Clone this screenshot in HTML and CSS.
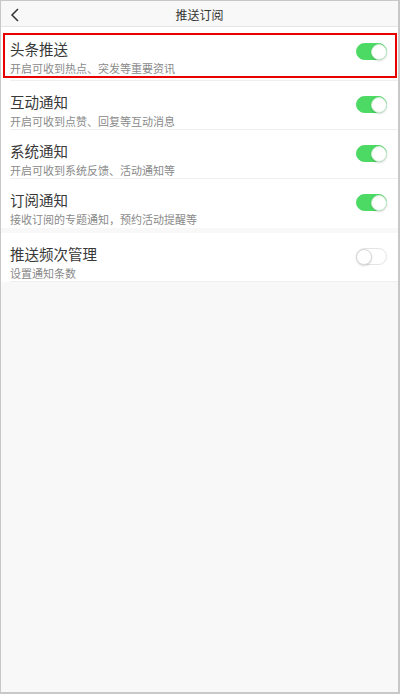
FILE: index.html
```html
<!DOCTYPE html>
<html lang="zh">
<head>
<meta charset="utf-8">
<title>推送订阅</title>
<link rel="stylesheet" href="styles.css">
</head>
<body>
<div class="screen">
  <header class="topbar">
    <svg class="back" width="10" height="14" viewBox="0 0 10 14"><polyline points="8,1 2,7 8,13" fill="none" stroke="#333" stroke-width="1.5"/></svg>
    <div class="topbar-title">推送订阅</div>
  </header>

  <section class="group">
    <div class="row row-first">
      <div class="row-inner">
        <div class="texts">
          <div class="title">头条推送</div>
          <div class="sub">开启可收到热点、突发等重要资讯</div>
        </div>
        <span class="switch on"><span class="knob"></span></span>
      </div>
    </div>
    <div class="row">
      <div class="row-inner">
        <div class="texts">
          <div class="title">互动通知</div>
          <div class="sub">开启可收到点赞、回复等互动消息</div>
        </div>
        <span class="switch on"><span class="knob"></span></span>
      </div>
    </div>
    <div class="row">
      <div class="row-inner">
        <div class="texts">
          <div class="title">系统通知</div>
          <div class="sub">开启可收到系统反馈、活动通知等</div>
        </div>
        <span class="switch on"><span class="knob"></span></span>
      </div>
    </div>
    <div class="row">
      <div class="row-inner last">
        <div class="texts">
          <div class="title">订阅通知</div>
          <div class="sub">接收订阅的专题通知，预约活动提醒等</div>
        </div>
        <span class="switch on"><span class="knob"></span></span>
      </div>
    </div>
  </section>

  <section class="group">
    <div class="row">
      <div class="row-inner">
        <div class="texts">
          <div class="title">推送频次管理</div>
          <div class="sub">设置通知条数</div>
        </div>
        <span class="switch"><span class="knob"></span></span>
      </div>
    </div>
  </section>

  <div class="highlight"></div>
</div>
</body>
</html>
```

FILE: styles.css
```css
html, body {
  margin: 0;
  padding: 0;
}
body {
  font-family: "Noto Sans CJK SC", "Noto Sans", sans-serif;
  background: #f8f8f8;
}
.screen {
  position: relative;
  width: 400px;
  height: 694px;
  box-sizing: border-box;
  border: 1px solid #c8c8c8;
  border-right-width: 2px;
  border-bottom-width: 2px;
  background: #f8f8f8;
  overflow: hidden;
}
.topbar {
  height: 25px;
  border-bottom: 1px solid #e6e6e6;
  background: #f8f8f8;
  display: flex;
  align-items: center;
  justify-content: center;
  position: relative;
}
.back {
  position: absolute;
  left: 9px;
  top: 7px;
}
.topbar-title {
  font-size: 12px;
  color: #333;
  line-height: 14px;
  margin-top: 2px;
}
.group {
  background: #fff;
}
.group + .group {
  margin-top: 5px;
}
.row {
  padding-left: 9px;
}
.row-inner {
  display: flex;
  align-items: flex-start;
  justify-content: space-between;
  padding: 12px 11px 1px 0;
  border-bottom: 1px solid #efefef;
}
.row-inner.last {
  border-bottom-color: transparent;
}
.row-first .row-inner {
  padding-top: 13px;
  padding-bottom: 5px;
}
.texts {
  display: flex;
  flex-direction: column;
  gap: 3px;
}
.title {
  font-size: 14.5px;
  line-height: 18px;
  color: #383838;
}
.sub {
  font-size: 11px;
  line-height: 14px;
  color: #8a8a8a;
}
.switch {
  position: relative;
  width: 31px;
  height: 17px;
  margin-top: 3px;
  box-sizing: border-box;
  border-radius: 9px;
  border: 1px solid #e3e3e3;
  background: #fff;
  display: flex;
  align-items: center;
  justify-content: flex-start;
}
.switch.on {
  background: #4cd964;
  border-color: #4cd964;
  justify-content: flex-end;
}
.knob {
  width: 16px;
  height: 16px;
  box-sizing: border-box;
  border-radius: 50%;
  background: #fff;
  border: 1px solid #d8d8d8;
  box-shadow: 0 1px 2px rgba(0, 0, 0, 0.15);
  margin: 0 -1px;
}
.switch.on .knob {
  border-color: #c9ebd0;
}
.highlight {
  position: absolute;
  left: 2px;
  top: 32px;
  width: 394px;
  height: 45px;
  box-sizing: border-box;
  border: 2px solid #e60000;
}
```
